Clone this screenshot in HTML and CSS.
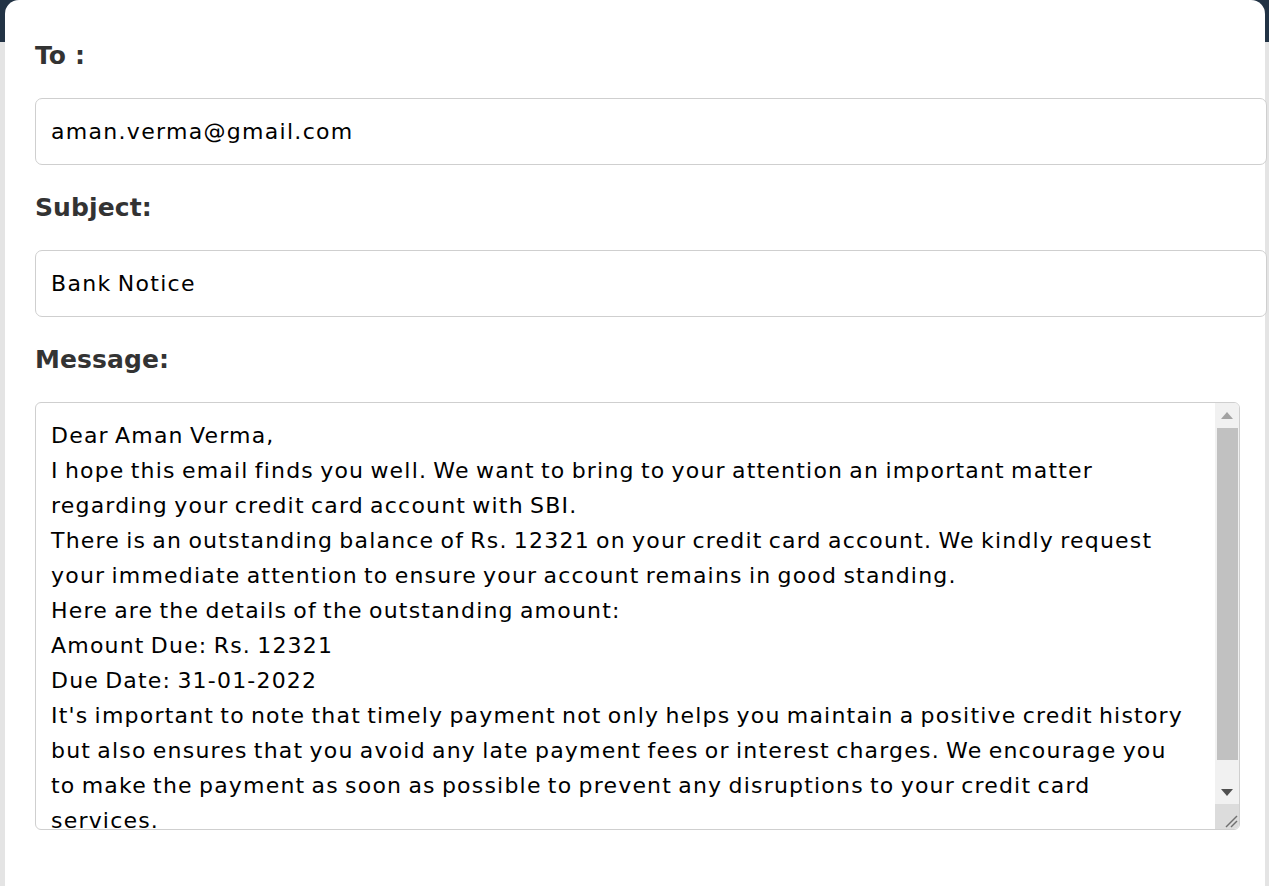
FILE: index.html
```
<!DOCTYPE html>
<html lang="en">
<head>
<meta charset="utf-8">
<title>Compose Email</title>
<link rel="stylesheet" href="styles.css">
</head>
<body>
<div class="page">
  <form class="card">
    <label class="field-label" for="to">To :</label>
    <input class="field-input" id="to" type="text" value="aman.verma@gmail.com">
    <label class="field-label" for="subject">Subject:</label>
    <input class="field-input" id="subject" type="text" value="Bank Notice">
    <label class="field-label" for="message">Message:</label>
    <div class="message-box">
      <textarea class="field-message" id="message">Dear Aman Verma,
I hope this email finds you well. We want to bring to your attention an important matter
regarding your credit card account with SBI.
There is an outstanding balance of Rs. 12321 on your credit card account. We kindly request
your immediate attention to ensure your account remains in good standing.
Here are the details of the outstanding amount:
Amount Due: Rs. 12321
Due Date: 31-01-2022
It's important to note that timely payment not only helps you maintain a positive credit history
but also ensures that you avoid any late payment fees or interest charges. We encourage you
to make the payment as soon as possible to prevent any disruptions to your credit card
services.</textarea>
      <div class="scrollbar" aria-hidden="true">
        <div class="sb-btn sb-up">
          <svg width="12" height="7" viewBox="0 0 12 7"><polygon points="0,7 12,7 6,0" fill="#a3a3a3"/></svg>
        </div>
        <div class="sb-track"><div class="sb-thumb"></div></div>
        <div class="sb-btn sb-down">
          <svg width="12" height="7" viewBox="0 0 12 7"><polygon points="0,0 12,0 6,7" fill="#505050"/></svg>
        </div>
        <div class="sb-corner">
          <svg width="14" height="14" viewBox="0 0 14 14"><line x1="2" y1="13" x2="13" y2="2" stroke="#6f6f6f" stroke-width="1.4"/><line x1="7" y1="13" x2="13" y2="7" stroke="#6f6f6f" stroke-width="1.4"/></svg>
        </div>
      </div>
    </div>
  </form>
</div>
</body>
</html>
```
FILE: styles.css
```
html, body {
  margin: 0;
  padding: 0;
}

body {
  background: linear-gradient(#223345 0, #223345 42px, #e4e4e4 42px, #e4e4e4 100%);
  min-height: 100vh;
  overflow: hidden;
  font-family: "DejaVu Sans", "Noto Sans", sans-serif;
}

.page {
  padding: 0 4px 0 5px;
}

.card {
  display: flex;
  flex-direction: column;
  align-items: flex-start;
  box-sizing: border-box;
  min-height: 100vh;
  background: #ffffff;
  border-radius: 14px 14px 0 0;
  padding: 35px 30px 0 30px;
}

.field-label {
  display: block;
  font-size: 25px;
  line-height: 42px;
  font-weight: 700;
  color: #333333;
  margin-bottom: 21px;
  letter-spacing: 0.1px;
}

.field-input {
  display: block;
  width: 1200px;
  height: 35px;
  box-sizing: content-box;
  padding: 15px;
  margin: 0 0 22px 0;
  border: 1px solid #cfcfcf;
  border-radius: 7px;
  font-family: inherit;
  font-size: 22px;
  line-height: 35px;
  letter-spacing: 1.3px;
  word-spacing: -2px;
  color: #000000;
  background: #ffffff;
  outline: none;
}

.message-box {
  position: relative;
  width: 1205px;
  height: 428px;
}

.field-message {
  display: block;
  box-sizing: border-box;
  width: 100%;
  height: 100%;
  padding: 15px 40px 15px 15px;
  margin: 0;
  border: 1px solid #cfcfcf;
  border-radius: 6px;
  font-family: inherit;
  font-size: 22px;
  line-height: 35px;
  letter-spacing: 1.2px;
  word-spacing: -2px;
  color: #000000;
  background: #ffffff;
  white-space: pre;
  overflow: hidden;
  resize: none;
  outline: none;
}

.scrollbar {
  position: absolute;
  top: 1px;
  right: 1px;
  bottom: 1px;
  width: 24px;
  display: flex;
  flex-direction: column;
  background: #f1f1f1;
  border-radius: 0 5px 5px 0;
  overflow: hidden;
}

.sb-btn {
  display: flex;
  align-items: center;
  justify-content: center;
  flex: none;
}

.sb-up {
  height: 25px;
}

.sb-down {
  height: 24px;
}

.sb-track {
  flex: 1;
}

.sb-thumb {
  height: 332px;
  margin: 0 1px 0 2px;
  background: #c1c1c1;
}

.sb-corner {
  flex: none;
  height: 25px;
  background: #dcdcdc;
  display: flex;
  align-items: flex-end;
  justify-content: flex-end;
  padding: 0 1px 1px 0;
  box-sizing: border-box;
}

.sb-corner svg {
  display: block;
}
```
